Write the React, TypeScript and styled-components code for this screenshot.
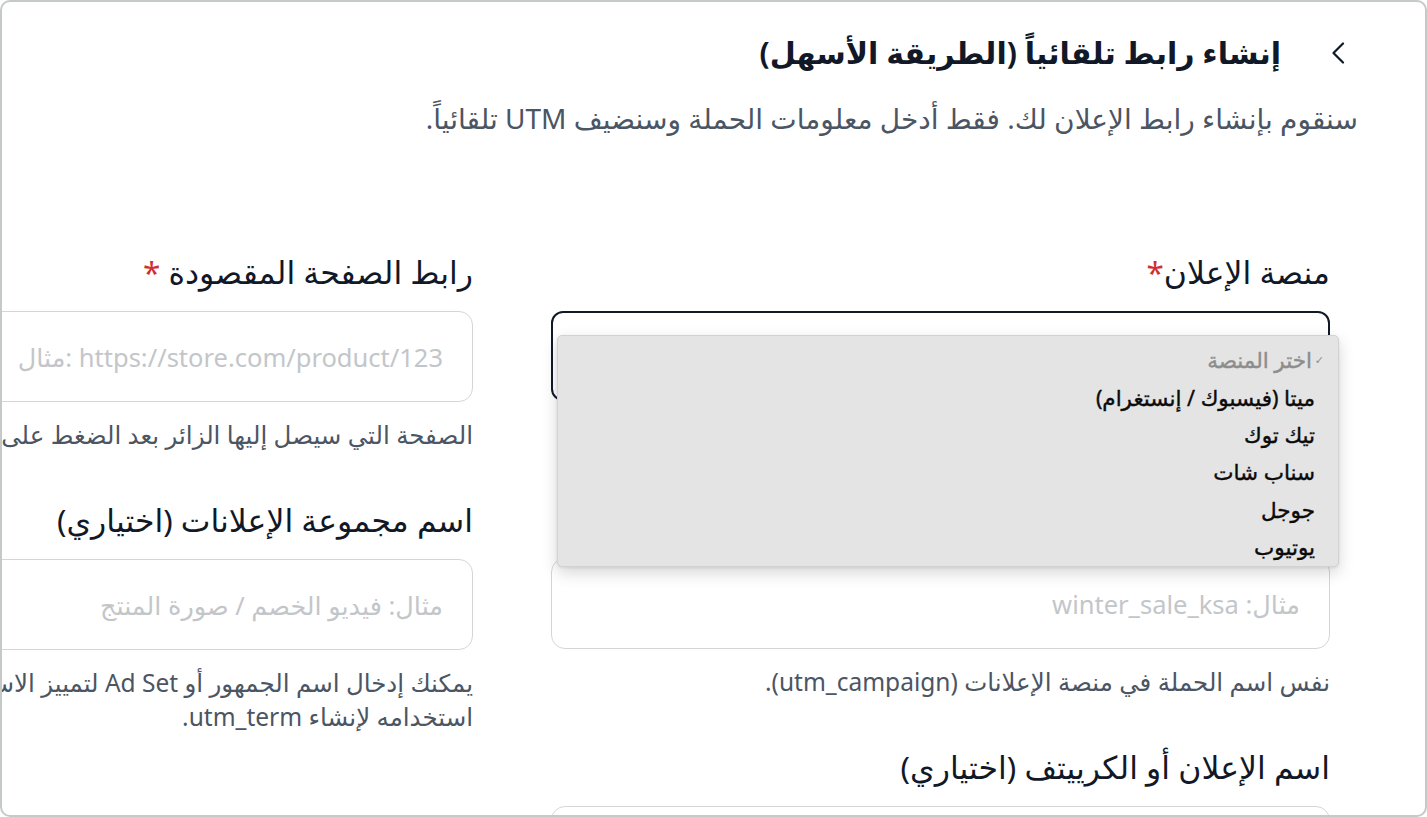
import styled, {createGlobalStyle} from 'styled-components';

const GlobalStyle = createGlobalStyle`
  html, body {
    margin: 0;
    padding: 0;
    background: #ffffff;
  }
  body {
    font-family: "Noto Sans", "DejaVu Sans", sans-serif;
  }
  * {
    box-sizing: border-box;
  }
`;

const Frame = styled.div`
  height: 817px;
  width: 1427px;
  border: 2px solid #c5cac9;
  border-radius: 10px;
  overflow: hidden;
  direction: rtl;
  background: #ffffff;
  padding-top: 29px;
`;

const Header = styled.header`
  padding-right: 67px;
`;

const TitleRow = styled.div`
  display: flex;
  align-items: center;
  gap: 50px;
  padding-right: 13px;
`;

const Title = styled.h1`
  margin: 0;
  font-size: 30px;
  line-height: 44px;
  font-weight: 700;
  color: #111827;
`;

const Subtitle = styled.p`
  margin: 25px 0 0;
  font-size: 28px;
  line-height: 36px;
  color: #4b5563;
  white-space: nowrap;
`;

const Form = styled.div`
  display: flex;
  gap: 78px;
  width: 1636px;
  margin-top: 116px;
  margin-right: 95px;
`;

const Column = styled.div`
  display: flex;
  flex-direction: column;
  gap: 48px;
  width: 779px;
  flex-shrink: 0;
`;

const Field = styled.div`
  display: flex;
  flex-direction: column;
`;

const Label = styled.label`
  font-size: 31.5px;
  line-height: 40px;
  color: #111827;
  margin-bottom: 19px;
  white-space: nowrap;
`;

const Star = styled.span`
  color: #d12f2f;
`;

const Input = styled.input`
  height: 91px;
  width: 100%;
  border: 1.5px solid #d3d6d9;
  border-radius: 14px;
  padding: 0 29px;
  font-family: inherit;
  font-size: 25.5px;
  color: #111827;
  background: #ffffff;
  outline: none;
  text-align: right;

  &::placeholder {
    color: #c3c6c9;
  }
`;

const SelectWrap = styled.div`
  position: relative;
  z-index: 5;
`;

const SelectBox = styled.div`
  height: 90px;
  border: 2px solid #111827;
  border-radius: 12px;
  padding: 0 29px;
  display: flex;
  align-items: center;
  font-size: 25px;
  color: #111827;
`;

const Menu = styled.ul`
  position: absolute;
  top: 24px;
  right: -9px;
  width: 782px;
  height: 232px;
  margin: 0;
  padding: 5px 0;
  list-style: none;
  background: #e4e4e4;
  border: 1px solid #d2d2d2;
  border-radius: 5px;
  box-shadow: 0 6px 16px rgba(0, 0, 0, 0.16), 0 1px 3px rgba(0, 0, 0, 0.08);
`;

const Option = styled.li<{ $placeholder?: boolean }>`
  height: 37.4px;
  display: flex;
  align-items: center;
  gap: 2px;
  padding-right: ${({$placeholder}) => ($placeholder ? '14px' : '23px')};
  font-size: 21.5px;
  -webkit-text-stroke: 0.4px currentColor;
  color: ${({$placeholder}) => ($placeholder ? '#8d8d8d' : '#0b0b0b')};
`;

const Check = styled.span`
  font-size: 11px;
  -webkit-text-stroke: 0;
  color: #8d8d8d;
  width: 10px;
`;

const Help = styled.p`
  margin: 16px 0 0;
  font-size: 24.5px;
  line-height: 34px;
  color: #4b5563;
  white-space: nowrap;
`;

const Chevron = () => (
  <svg width="14" height="22" viewBox="0 0 14 22" fill="none">
    <polyline points="12,1.5 2.5,11 12,20.5" stroke="#111827" strokeWidth="2.2" strokeLinecap="round" strokeLinejoin="round" />
  </svg>
);

const platforms = ['ميتا (فيسبوك / إنستغرام)', 'تيك توك', 'سناب شات', 'جوجل', 'يوتيوب'];

export default function App() {
  return (
    <Frame>
      <GlobalStyle />
      <Header>
        <TitleRow>
          <Chevron />
          <Title>إنشاء رابط تلقائياً (الطريقة الأسهل)</Title>
        </TitleRow>
        <Subtitle>سنقوم بإنشاء رابط الإعلان لك. فقط أدخل معلومات الحملة وسنضيف UTM تلقائياً.</Subtitle>
      </Header>

      <Form>
        <Column>
          <Field>
            <Label>منصة الإعلان<Star>*</Star></Label>
            <SelectWrap>
              <SelectBox>اختر المنصة</SelectBox>
              <Menu>
                <Option $placeholder>
                  <Check>✓</Check>
                  اختر المنصة
                </Option>
                {platforms.map(p => (
                  <Option key={p}>{p}</Option>
                ))}
              </Menu>
            </SelectWrap>
            <Help>اختر المنصة التي ستنشر عليها الإعلان.</Help>
          </Field>
          <Field>
            <Label>اسم الحملة <Star>*</Star></Label>
            <Input placeholder="مثال: winter_sale_ksa" />
            <Help>نفس اسم الحملة في منصة الإعلانات (utm_campaign).</Help>
          </Field>
          <Field>
            <Label>اسم الإعلان أو الكرييتف (اختياري)</Label>
            <Input placeholder="مثال: فيديو 15 ثانية" />
          </Field>
        </Column>

        <Column>
          <Field>
            <Label>رابط الصفحة المقصودة <Star>*</Star></Label>
            <Input dir="ltr" placeholder="مثال: https://store.com/product/123" />
            <Help>الصفحة التي سيصل إليها الزائر بعد الضغط على الإعلان.</Help>
          </Field>
          <Field>
            <Label>اسم مجموعة الإعلانات (اختياري)</Label>
            <Input placeholder="مثال: فيديو الخصم / صورة المنتج" />
            <Help>
              يمكنك إدخال اسم الجمهور أو Ad Set لتمييز الاستهداف، وسيتم
              <br />
              استخدامه لإنشاء utm_term.
            </Help>
          </Field>
        </Column>
      </Form>
    </Frame>
  );
}
